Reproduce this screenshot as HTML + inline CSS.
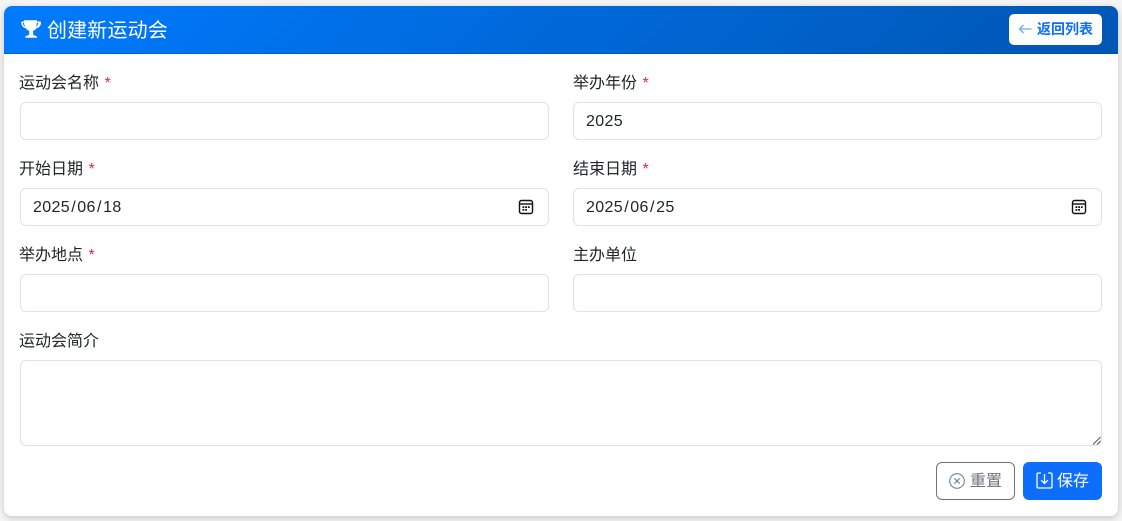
<!DOCTYPE html>
<html lang="zh-CN">
<head>
<meta charset="utf-8">
<title>创建新运动会</title>
<style>
*{box-sizing:border-box}
html,body{margin:0;padding:0;width:1122px;height:521px;overflow:hidden;background:#f5f5f6;font-family:"Liberation Sans","Noto Sans CJK SC",sans-serif;color:#212529}
.card{position:absolute;left:4px;top:6px;width:1114px;height:510px;background:#fff;border-radius:8px;box-shadow:0 2px 8px rgba(0,0,0,.2)}
.head{position:absolute;left:0;top:0;width:1114px;height:48px;border-radius:8px 8px 0 0;background:linear-gradient(135deg,#007bff,#0056b3);border-bottom:1px solid rgba(0,60,140,.35)}
.title{position:absolute;left:43px;top:11px;font-size:20px;line-height:28px;color:#fff;white-space:nowrap;letter-spacing:.15px}
.back{position:absolute;left:1005px;top:8px;width:93px;height:31px;background:#fff;border-radius:5px;color:#0d6efd;font-size:14px;font-weight:700;line-height:31px;padding-left:28px;white-space:nowrap}
.abs{position:absolute}
label{position:absolute;font-size:16px;line-height:24px;white-space:nowrap;color:#212529;margin-top:1px}
label i{font-style:normal;color:#e8283c;margin-left:1px}
.inp{position:absolute;width:529px;height:38px;border:1px solid #e0e2e7;border-radius:6px;background:#fff;font-size:16px;line-height:38px;padding-left:12px;color:#212529;letter-spacing:.35px}
.inp s{text-decoration:none;padding:0 1.25px}
.btn{position:absolute;top:462px;height:38px;border-radius:6px;font-size:16px;line-height:38px;white-space:nowrap}
</style>
</head>
<body>
<div class="card">
  <div class="head">
    <svg class="abs" style="left:15.500px;top:13px" width="21" height="20" viewBox="0 0 16 16" preserveAspectRatio="none" fill="#fff"><path d="M3 1h10v1h2.200c.4 0 .8.3.8.8 0 2.300-1.200 4.200-3.600 4.700-.6 1-1.400 1.700-2.400 2V12c0 .7.5 1 1.200 1.200l1 .3c.4.1.8.5.8 1V15H4v-.5c0-.5.4-.9.8-1l1-.3C6.500 13 7 12.700 7 12V9.500c-1-.3-1.800-1-2.400-2C2.200 7 1 5.100 1 2.800c0-.5.400-.8.800-.8H3V1zm0 2H2.100c.1 1.400.8 2.700 1.900 3.200C3.500 5.300 3.200 4.200 3 3zm10 0c-.2 1.200-.5 2.300-1 3.200 1.100-.5 1.800-1.800 1.900-3.200H13z" fill-rule="evenodd"/></svg>
    <div class="title">创建新运动会</div>
    <div class="back">返回列表</div>
    <svg class="abs" style="left:1014px;top:17px" width="14" height="12" viewBox="0 0 14 12" fill="none" stroke="#6ea8fb" stroke-width="1.300"><path d="M13.500 6H1.500M5.500 2L1.500 6l4 4"/></svg>
  </div>
</div>

<label style="left:19px;top:71px">运动会名称 <i>*</i></label>
<div class="inp" style="left:20px;top:102px"></div>
<label style="left:573px;top:71px">举办年份 <i>*</i></label>
<div class="inp" style="left:573px;top:102px">2025</div>

<label style="left:19px;top:157px">开始日期 <i>*</i></label>
<div class="inp" style="left:20px;top:188px">2025<s>/</s>06<s>/</s>18</div>
<svg class="abs" style="left:518px;top:199px" width="16" height="16" viewBox="0 0 16 16" fill="none"><rect x="1.500" y="1.500" width="13" height="13" rx="2" stroke="#111" stroke-width="1.400"/><path d="M2 5h12" stroke="#111" stroke-width="1.400"/><path d="M4.500 7.200h1.800V9H4.500zM7.200 7.200H9V9H7.200zM9.900 7.200h1.800V9H9.900zM4.500 10h1.800v1.800H4.500zM7.200 10H9v1.800H7.200z" fill="#111"/></svg>
<label style="left:573px;top:157px">结束日期 <i>*</i></label>
<div class="inp" style="left:573px;top:188px">2025<s>/</s>06<s>/</s>25</div>
<svg class="abs" style="left:1071px;top:199px" width="16" height="16" viewBox="0 0 16 16" fill="none"><rect x="1.500" y="1.500" width="13" height="13" rx="2" stroke="#111" stroke-width="1.400"/><path d="M2 5h12" stroke="#111" stroke-width="1.400"/><path d="M4.500 7.200h1.800V9H4.500zM7.200 7.200H9V9H7.200zM9.900 7.200h1.800V9H9.900zM4.500 10h1.800v1.800H4.500zM7.200 10H9v1.800H7.200z" fill="#111"/></svg>

<label style="left:19px;top:243px">举办地点 <i>*</i></label>
<div class="inp" style="left:20px;top:274px"></div>
<label style="left:573px;top:243px">主办单位</label>
<div class="inp" style="left:573px;top:274px"></div>

<label style="left:19px;top:329px">运动会简介</label>
<div class="inp" style="left:20px;top:360px;width:1082px;height:86px"></div>
<svg class="abs" style="left:1092px;top:436px" width="9" height="9" viewBox="0 0 9 9" stroke="#555" stroke-width="1"><path d="M1 8.500L8.500 1M5 8.500L8.500 5"/></svg>

<div class="btn" style="left:936px;width:79px;border:1px solid #6c757d;color:#6c757d;padding-left:33px;background:#fff;line-height:37px">重置</div>
<svg class="abs" style="left:949px;top:473px" width="16" height="16" viewBox="0 0 16 16" fill="none" stroke="#6c8596" stroke-width="1.100"><circle cx="8" cy="8" r="7.300"/><path d="M5.300 5.300l5.400 5.400M10.700 5.300l-5.400 5.400"/></svg>
<div class="btn" style="left:1023px;width:79px;background:#0d6efd;color:#fff;padding-left:34px;line-height:39px">保存</div>
<svg class="abs" style="left:1036px;top:472px" width="17" height="17" viewBox="0 0 17 17" fill="none" stroke="#fff" stroke-width="1.300"><path d="M5 1H2.500C1.500 1 1 1.500 1 2.500v12C1 15.500 1.500 16 2.500 16h12c1 0 1.500-.5 1.500-1.500v-12C16 1.500 15.500 1 14.500 1H12"/><path d="M8.500 2v9.500M5.200 8.200l3.300 3.300 3.300-3.300"/></svg>
</body>
</html>
